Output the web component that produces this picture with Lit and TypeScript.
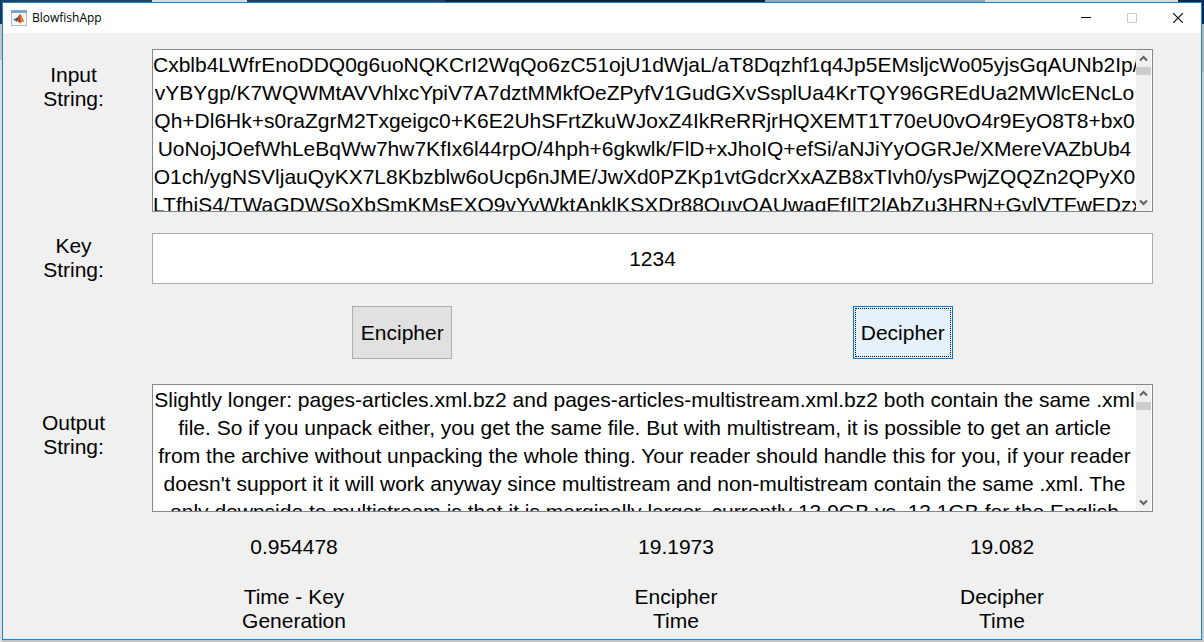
import { LitElement, html, css } from "lit";
import { customElement, property } from "lit/decorators.js";

const CIPHER_TEXT = [
  "Cxblb4LWfrEnoDDQ0g6uoNQKCrI2WqQo6zC51ojU1dWjaL/aT8Dqzhf1q4Jp5EMsljcWo05yjsGqAUNb2Ip/",
  "vYBYgp/K7WQWMtAVVhlxcYpiV7A7dztMMkfOeZPyfV1GudGXvSsplUa4KrTQY96GREdUa2MWlcENcLo",
  "Qh+Dl6Hk+s0raZgrM2Txgeigc0+K6E2UhSFrtZkuWJoxZ4IkReRRjrHQXEMT1T70eU0vO4r9EyO8T8+bx0",
  "UoNojJOefWhLeBqWw7hw7KfIx6l44rpO/4hph+6gkwlk/FlD+xJhoIQ+efSi/aNJiYyOGRJe/XMereVAZbUb4",
  "O1ch/ygNSVljauQyKX7L8Kbzblw6oUcp6nJME/JwXd0PZKp1vtGdcrXxAZB8xTIvh0/ysPwjZQQZn2QPyX0",
  "LTfhiS4/TWaGDWSoXbSmKMsEXQ9vYvWktAnklKSXDr88OuvOAUwaqEfIlT2lAbZu3HRN+GvlVTFwEDzx",
].join("\n");

const PLAIN_TEXT = [
  "Slightly longer: pages-articles.xml.bz2 and pages-articles-multistream.xml.bz2 both contain the same .xml",
  "file. So if you unpack either, you get the same file. But with multistream, it is possible to get an article",
  "from the archive without unpacking the whole thing. Your reader should handle this for you, if your reader",
  "doesn't support it it will work anyway since multistream and non-multistream contain the same .xml. The",
  "only downside to multistream is that it is marginally larger, currently 13.9GB vs. 13.1GB for the English",
].join("\n");

@customElement("scroll-text")
class ScrollText extends LitElement {
  @property() value = "";
  @property() label = "";

  static styles = css`
    :host {
      display: flex;
      min-width: 0;
      min-height: 0;
      box-sizing: border-box;
      padding-right: 1px;
      border: 1px solid #828790;
      background: #fff;
    }
    .text {
      flex: 1;
      min-width: 0;
      margin: 0;
      padding: 1px 0 0;
      border: 0;
      outline: 0;
      resize: none;
      overflow: hidden;
      background: #fff;
      color: #000;
      font: 21px/28px "Liberation Sans", Arial, sans-serif;
      text-align: center;
      white-space: pre;
    }
    .bar {
      display: flex;
      flex-direction: column;
      width: 15px;
      background: #f0f0f0;
    }
    .arrow {
      display: block;
      height: 17px;
      padding: 0;
      border: 0;
      background: none;
    }
    .arrow svg {
      display: block;
      margin: auto;
    }
    .track {
      flex: 1;
    }
    .thumb {
      height: 8px;
      background: #cdcdcd;
    }
  `;

  render() {
    return html`
      <textarea class="text" wrap="off" spellcheck="false" aria-label=${this.label} .value=${this.value}></textarea>
      <div class="bar">
        <button class="arrow" aria-label="Scroll up">
          <svg width="9" height="7" viewBox="0 0 9 7"><path d="M1 5.500 4.500 2 8 5.500" fill="none" stroke="#606060" stroke-width="2" /></svg>
        </button>
        <div class="track"><div class="thumb"></div></div>
        <button class="arrow" aria-label="Scroll down">
          <svg width="9" height="7" viewBox="0 0 9 7"><path d="M1 1.500 4.500 5 8 1.500" fill="none" stroke="#606060" stroke-width="2" /></svg>
        </button>
      </div>
    `;
  }
}

@customElement("app-root")
class AppRoot extends LitElement {
  static styles = css`
    :host {
      display: block;
      box-sizing: border-box;
      height: 100vh;
      min-height: 560px;
      padding: 2px;
      background:
        linear-gradient(90deg, #1c4468 0 152px, #d5dce4 152px 247px, #1c3f63 247px 445px, #0d2540 445px 765px, #8fa9c4 765px 985px, #dcdcdc 985px 1178px, #0a2a52 1178px) 0 0 / 100% 2px no-repeat,
        linear-gradient(#0a2a52 0 24px, #b4b4b4 24px 72px, #c8c8c8 72px) 100% 0 / 2px 100% no-repeat,
        linear-gradient(#123a61 0 24px, #c4c4c4 24px 60px, #dfe0dc 60px) 0 0 / 2px 100% no-repeat,
        #c3c3c3;
      color: #000;
      font: 21px/24px "Liberation Sans", Arial, sans-serif;
    }
    .window {
      display: flex;
      flex-direction: column;
      box-sizing: border-box;
      height: 100%;
      border: 1px solid #1883d7;
      background: #f0f0f0;
    }
    .titlebar {
      display: flex;
      align-items: center;
      height: 30px;
      padding-left: 8px;
      background: #fff;
    }
    .title {
      flex: 1;
      margin: 0 0 0 5px;
      font: 12px/16px "Open Sans", "Noto Sans", sans-serif;
    }
    .caption {
      width: 46px;
      height: 30px;
      padding: 0;
      border: 0;
      background: none;
    }
    .caption svg {
      display: block;
      margin: auto;
    }
    .form {
      flex: 1;
      min-height: 0;
      display: grid;
      grid-template-columns: 141px minmax(0, 1fr);
      grid-template-rows: minmax(0, 163fr) 51px 58px minmax(0, 128fr) auto;
      row-gap: 21px;
      column-gap: 8px;
      padding: 16px 48px 6px 0;
    }
    .label {
      text-align: center;
    }
    .label.input {
      padding-top: 14px;
    }
    .label.keyed {
      padding-top: 1px;
    }
    .label.output {
      padding-top: 27px;
    }
    .key {
      box-sizing: border-box;
      width: 100%;
      padding: 0;
      border: 1px solid #ababab;
      border-radius: 0;
      outline: 0;
      background: #fff;
      color: #000;
      font: inherit;
      text-align: center;
    }
    .actions {
      grid-column: 2;
      display: grid;
      grid-template-columns: 1fr 1fr;
      justify-items: center;
      align-items: start;
      padding-top: 1px;
    }
    .action {
      width: 100px;
      height: 53px;
      padding: 0;
      border: 1px solid #adadad;
      background: #e1e1e1;
      color: #000;
      font: inherit;
    }
    .action.active {
      border-color: #0078d7;
      background: #e5f1fb;
      outline: 1px dotted #000;
      outline-offset: -3px;
    }
    .stats {
      grid-column: 2;
      display: grid;
      grid-template-columns: 284fr 480fr 172fr 65fr;
      margin: 0;
      padding-top: 2px;
      text-align: center;
    }
    .stat {
      display: flex;
      flex-direction: column-reverse;
      gap: 26px;
    }
    .stat dd {
      margin: 0;
    }
  `;

  private stats = [
    { value: "0.954478", lines: ["Time - Key", "Generation"] },
    { value: "19.1973", lines: ["Encipher", "Time"] },
    { value: "19.082", lines: ["Decipher", "Time"] },
  ];

  render() {
    return html`
      <main class="window">
        <header class="titlebar">
          <svg width="16" height="16" viewBox="0 0 16 16" aria-hidden="true">
            <rect x=".5" y=".5" width="15" height="15" fill="#f4f6f8" stroke="#b4bac0" />
            <rect width="16" height="3" fill="#7ba7c9" />
            <path d="M2 9.500 5.200 8l1.800 1.500-1.800 2z" fill="#4a8cc4" />
            <path d="M5.200 8C7 7.800 8 4.800 9.200 4.200L7.500 9l-2.300 2.500L4.500 10z" fill="#2b5580" />
            <path d="M9.200 4.200C10.500 4.500 11.800 9 13.500 12c-1.800-1.200-2.700-.5-4.200 1.200C8.500 12.500 8 11 5.200 11.500 7.500 10 8 5 9.200 4.200z" fill="#e0621f" />
            <path d="M9.200 4.200C9.600 6 9 10 9.300 13.200 8.500 12.500 8 11 6.800 11.200 8.300 9 8.400 5.500 9.200 4.200z" fill="#a83a1a" />
            <path d="M9.700 5.500c.7 2 1 3.500 1 5l-.8 1.200c-.3-2 .1-4-.2-6.200z" fill="#f7b23c" />
          </svg>
          <h1 class="title">BlowfishApp</h1>
          <button class="caption" aria-label="Minimize">
            <svg width="10" height="10" viewBox="0 0 10 10"><path d="M0 4.500h10" stroke="#000" /></svg>
          </button>
          <button class="caption" aria-label="Maximize" disabled>
            <svg width="10" height="10" viewBox="0 0 10 10"><path d="M.5.5h9v9h-9z" fill="none" stroke="#ccc" /></svg>
          </button>
          <button class="caption" aria-label="Close">
            <svg width="10" height="10" viewBox="0 0 10 10"><path d="m0 0 10 10M10 0 0 10" stroke="#000" stroke-width="1.100" /></svg>
          </button>
        </header>
        <div class="form">
          <div class="label input">Input<br />String:</div>
          <scroll-text label="Input String" .value=${CIPHER_TEXT}></scroll-text>
          <label class="label keyed" for="key">Key<br />String:</label>
          <input class="key" id="key" type="text" value="1234" />
          <div class="actions">
            <button class="action">Encipher</button>
            <button class="action active">Decipher</button>
          </div>
          <div class="label output">Output<br />String:</div>
          <scroll-text label="Output String" .value=${PLAIN_TEXT}></scroll-text>
          <dl class="stats">
            ${this.stats.map(
              (s) => html`<div class="stat">
                <dt>${s.lines[0]}<br />${s.lines[1]}</dt>
                <dd>${s.value}</dd>
              </div>`
            )}
          </dl>
        </div>
      </main>
    `;
  }
}
